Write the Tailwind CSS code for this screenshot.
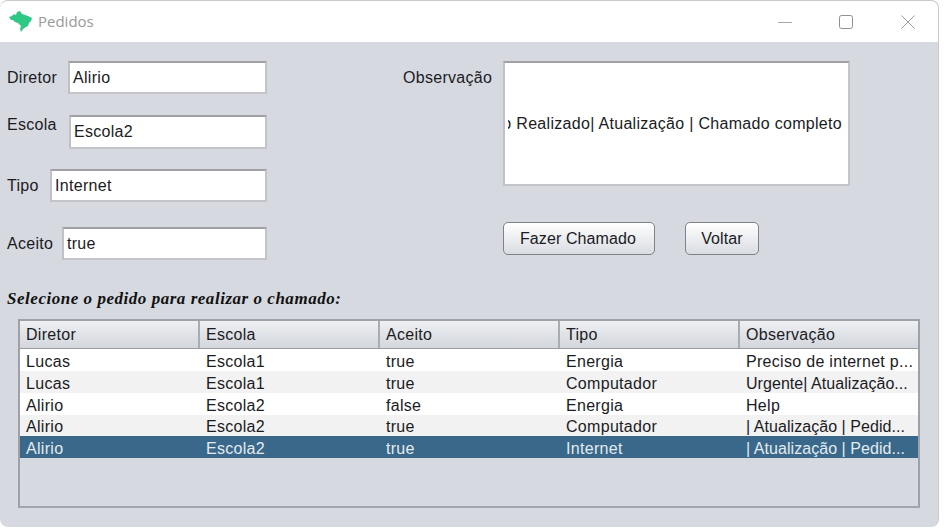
<!DOCTYPE html>
<html lang="pt-BR">
<head>
  <meta charset="UTF-8">
  <title>Pedidos</title>
  <script src="https://cdn.jsdelivr.net/npm/@tailwindcss/browser@4"></script>
</head>
<body class="bg-white w-[946px] h-[530px] overflow-hidden font-['Liberation_Sans',sans-serif] text-[16px] tracking-[0.3px] text-[#1b1b24]">
<div class="w-[939px] h-[527px] bg-[#d6d9e0] rounded-lg overflow-hidden border-t border-r border-[#c9c9c9]">
  <!-- barra de titulo -->
  <div class="h-[41px] bg-white flex items-center">
    <svg class="ml-[9px] w-[23px] h-[21px]" viewBox="0 0 23 21"><path fill="#2fc784" d="M0 6 L3 5 L5 3 L7 4 L8 1 L11 0 L13 3 L16 4 L19 5 L23 7 L22 10 L20 12 L19 15 L17 16 L14 18 L12 21 L11 18 L12 15 L9 12 L6 11 L4 9 L2 9 Z"/></svg>
    <span class="ml-[6px] font-['Open_Sans',sans-serif] text-[15px] tracking-normal text-[#9a9a9a]">Pedidos</span>
    <div class="ml-auto mr-[23px] flex items-center">
      <svg class="w-[14px] h-[14px]" viewBox="0 0 14 14"><path d="M0 7.5H14" stroke="#a8a8a8" stroke-width="1"/></svg>
      <svg class="ml-[47px] w-[14px] h-[14px]" viewBox="0 0 14 14"><rect x="0.5" y="0.5" width="13" height="13" rx="2" fill="none" stroke="#8f8f8f" stroke-width="1"/></svg>
      <svg class="ml-[48px] w-[14px] h-[14px]" viewBox="0 0 14 14"><path d="M0.5 0.5L13.5 13.5M13.5 0.5L0.5 13.5" stroke="#9a9a9a" stroke-width="1"/></svg>
    </div>
  </div>

  <div class="flex">
    <!-- campos -->
    <div class="w-[260px] ml-[7px] mt-[19px] flex flex-col">
      <div class="flex items-center h-[33px]">
        <span>Diretor</span>
        <div class="ml-auto w-[199px] h-[33px] bg-white border-2 border-t-[#a0a0a6] border-l-[#c0c0c6] border-r-[#c4c4ca] border-b-[#c4c4ca] pl-[3px] leading-[29px]">Alirio</div>
      </div>
      <div class="flex h-[34px] mt-[21px]">
        <span class="leading-[20px]">Escola</span>
        <div class="ml-auto w-[198px] h-[34px] bg-white border-2 border-t-[#a0a0a6] border-l-[#c0c0c6] border-r-[#c4c4ca] border-b-[#c4c4ca] pl-[3px] leading-[30px]">Escola2</div>
      </div>
      <div class="flex items-center h-[33px] mt-[20px]">
        <span>Tipo</span>
        <div class="ml-auto w-[217px] h-[33px] bg-white border-2 border-t-[#a0a0a6] border-l-[#c0c0c6] border-r-[#c4c4ca] border-b-[#c4c4ca] pl-[3px] leading-[29px]">Internet</div>
      </div>
      <div class="flex items-center h-[33px] mt-[25px]">
        <span>Aceito</span>
        <div class="ml-auto w-[205px] h-[33px] bg-white border-2 border-t-[#a0a0a6] border-l-[#c0c0c6] border-r-[#c4c4ca] border-b-[#c4c4ca] pl-[3px] leading-[29px]">true</div>
      </div>
    </div>

    <!-- observacao -->
    <div class="ml-[136px] mt-[19px] flex items-start">
      <span class="w-[100px] mt-[5px]">Observação</span>
      <div>
        <div class="w-[347px] h-[125px] bg-white border-2 border-t-[#a0a0a6] border-l-[#c0c0c6] border-r-[#c4c4ca] border-b-[#c4c4ca] pl-[3px] pr-[6px]">
          <div class="h-full overflow-hidden flex items-center justify-end whitespace-nowrap">Pedido Realizado| Atualização | Chamado completo</div>
        </div>
        <div class="flex mt-[36px]">
          <button class="w-[152px] h-[33px] pr-[2px] rounded-[5px] border border-[#7f8288] tracking-[0.1px] bg-gradient-to-b from-white to-[#d9dce2]">Fazer Chamado</button>
          <button class="ml-[30px] w-[74px] h-[33px] rounded-[5px] border border-[#7f8288] tracking-[0.1px] bg-gradient-to-b from-white to-[#d9dce2]">Voltar</button>
        </div>
      </div>
    </div>
  </div>

  <p class="ml-[7px] mt-[29px] font-['Liberation_Serif',serif] font-bold italic text-[17px] tracking-[0.53px] leading-[20px] text-[#111]">Selecione o pedido para realizar o chamado:</p>

  <!-- tabela -->
  <div class="ml-[18px] mt-[10px] w-[902px] h-[189px] border-2 border-[#9ea1a8] border-b-[#a3a6ad]">
    <div class="grid grid-cols-[180px_180px_180px_180px_178px] h-[28px] bg-gradient-to-b from-[#eef0f3] to-[#d3d6dc] border-b border-[#9a9da4]">
      <div class="pl-[6px] leading-[27px] border-r-2 border-[#a9acb3]">Diretor</div>
      <div class="pl-[6px] leading-[27px] border-r-2 border-[#a9acb3]">Escola</div>
      <div class="pl-[6px] leading-[27px] border-r-2 border-[#a9acb3]">Aceito</div>
      <div class="pl-[6px] leading-[27px] border-r-2 border-[#a9acb3]">Tipo</div>
      <div class="pl-[6px] leading-[27px]">Observação</div>
    </div>
    <div class="grid grid-cols-[180px_180px_180px_180px_178px] h-[22px] leading-[25px] bg-white">
      <div class="pl-[6px]">Lucas</div><div class="pl-[6px]">Escola1</div><div class="pl-[6px]">true</div><div class="pl-[6px]">Energia</div><div class="pl-[6px]">Preciso de internet p...</div>
    </div>
    <div class="grid grid-cols-[180px_180px_180px_180px_178px] h-[22px] leading-[25px] bg-[#f2f2f2]">
      <div class="pl-[6px]">Lucas</div><div class="pl-[6px]">Escola1</div><div class="pl-[6px]">true</div><div class="pl-[6px]">Computador</div><div class="pl-[6px] tracking-[0.05px]">Urgente| Atualização...</div>
    </div>
    <div class="grid grid-cols-[180px_180px_180px_180px_178px] h-[22px] leading-[25px] bg-white">
      <div class="pl-[6px]">Alirio</div><div class="pl-[6px]">Escola2</div><div class="pl-[6px]">false</div><div class="pl-[6px]">Energia</div><div class="pl-[6px]">Help</div>
    </div>
    <div class="grid grid-cols-[180px_180px_180px_180px_178px] h-[21px] leading-[24px] bg-[#f2f2f2]">
      <div class="pl-[6px]">Alirio</div><div class="pl-[6px]">Escola2</div><div class="pl-[6px]">true</div><div class="pl-[6px]">Computador</div><div class="pl-[6px] tracking-[0.05px]">| Atualização | Pedid...</div>
    </div>
    <div class="grid grid-cols-[180px_180px_180px_180px_178px] h-[22px] leading-[25px] bg-[#39688a] text-[#e4ebf0]">
      <div class="pl-[6px]">Alirio</div><div class="pl-[6px]">Escola2</div><div class="pl-[6px]">true</div><div class="pl-[6px]">Internet</div><div class="pl-[6px] tracking-[0.05px]">| Atualização | Pedid...</div>
    </div>
  </div>
</div>
</body>
</html>
